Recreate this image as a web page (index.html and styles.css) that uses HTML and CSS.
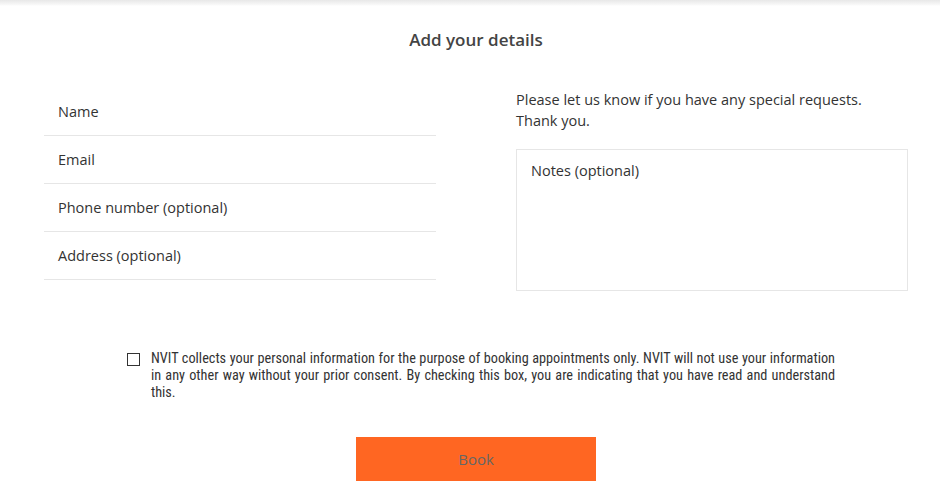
FILE: index.html
```html
<!DOCTYPE html>
<html lang="en">
<head>
<meta charset="utf-8">
<link rel="stylesheet" href="styles.css">
</head>
<body>
<div class="topbar"></div>
<main class="page">
  <h1 class="title">Add your details</h1>
  <div class="columns">
    <div class="fields">
      <div class="field">Name</div>
      <div class="field">Email</div>
      <div class="field">Phone number (optional)</div>
      <div class="field">Address (optional)</div>
    </div>
    <div class="notes-col">
      <p class="intro">Please let us know if you have any special requests.<br>Thank you.</p>
      <div class="notes">Notes (optional)</div>
    </div>
  </div>
  <div class="consent">
    <span class="checkbox"></span>
    <p class="consent-text">NVIT collects your personal information for the purpose of booking appointments only. NVIT will not use your information in any other way without your prior consent. By checking this box, you are indicating that you have read and understand this.</p>
  </div>
  <div class="actions">
    <button class="book">Book</button>
  </div>
</main>
</body>
</html>
```
FILE: styles.css
```css
* { box-sizing: border-box; }
html, body { margin: 0; padding: 0; background: #fff; }
body {
  font-family: "Open Sans", "Noto Sans", sans-serif;
  color: #333;
  width: 940px;
  height: 493px;
  overflow: hidden;
}
.topbar {
  height: 6px;
  background: linear-gradient(#e8e8e8, #f6f6f6 70%, #fff);
}
.page {
  padding: 0 32px 0 44px;
}
.title {
  margin: 21px 0 0;
  text-align: center;
  font-size: 17px;
  font-weight: 600;
  color: #444;
  line-height: 26px;
}
.columns {
  display: flex;
  justify-content: space-between;
  margin-top: 35px;
}
.fields {
  width: 392px;
}
.field {
  height: 48px;
  padding: 0 14px;
  display: flex;
  align-items: center;
  font-size: 14.5px;
  color: #333;
  border-bottom: 1px solid #e6e6e6;
}
.notes-col {
  width: 392px;
}
.intro {
  margin: 1px 0 0;
  font-size: 14.5px;
  line-height: 21px;
  color: #333;
}
.notes {
  margin-top: 18px;
  height: 142px;
  border: 1px solid #e6e6e6;
  padding: 10px 14px;
  font-size: 14.5px;
  line-height: 22px;
  color: #333;
}
.consent {
  display: flex;
  align-items: flex-start;
  margin: 59px 0 0 83px;
  width: 708px;
}
.checkbox {
  flex: none;
  width: 13px;
  height: 13px;
  border: 1px solid #333;
  margin-top: 3px;
  margin-right: 11px;
}
.consent-text {
  margin: 0;
  font-family: "Roboto Condensed", "Noto Sans", sans-serif;
  font-stretch: condensed;
  font-size: 14.25px;
  line-height: 17px;
  text-align: justify;
  color: #333;
}
.actions {
  display: flex;
  justify-content: center;
  margin-top: 36px;
}
.book {
  width: 240px;
  height: 44px;
  border: none;
  background: #ff6622;
  color: #666;
  font-family: "Open Sans", "Noto Sans", sans-serif;
  font-size: 15px;
}
```
